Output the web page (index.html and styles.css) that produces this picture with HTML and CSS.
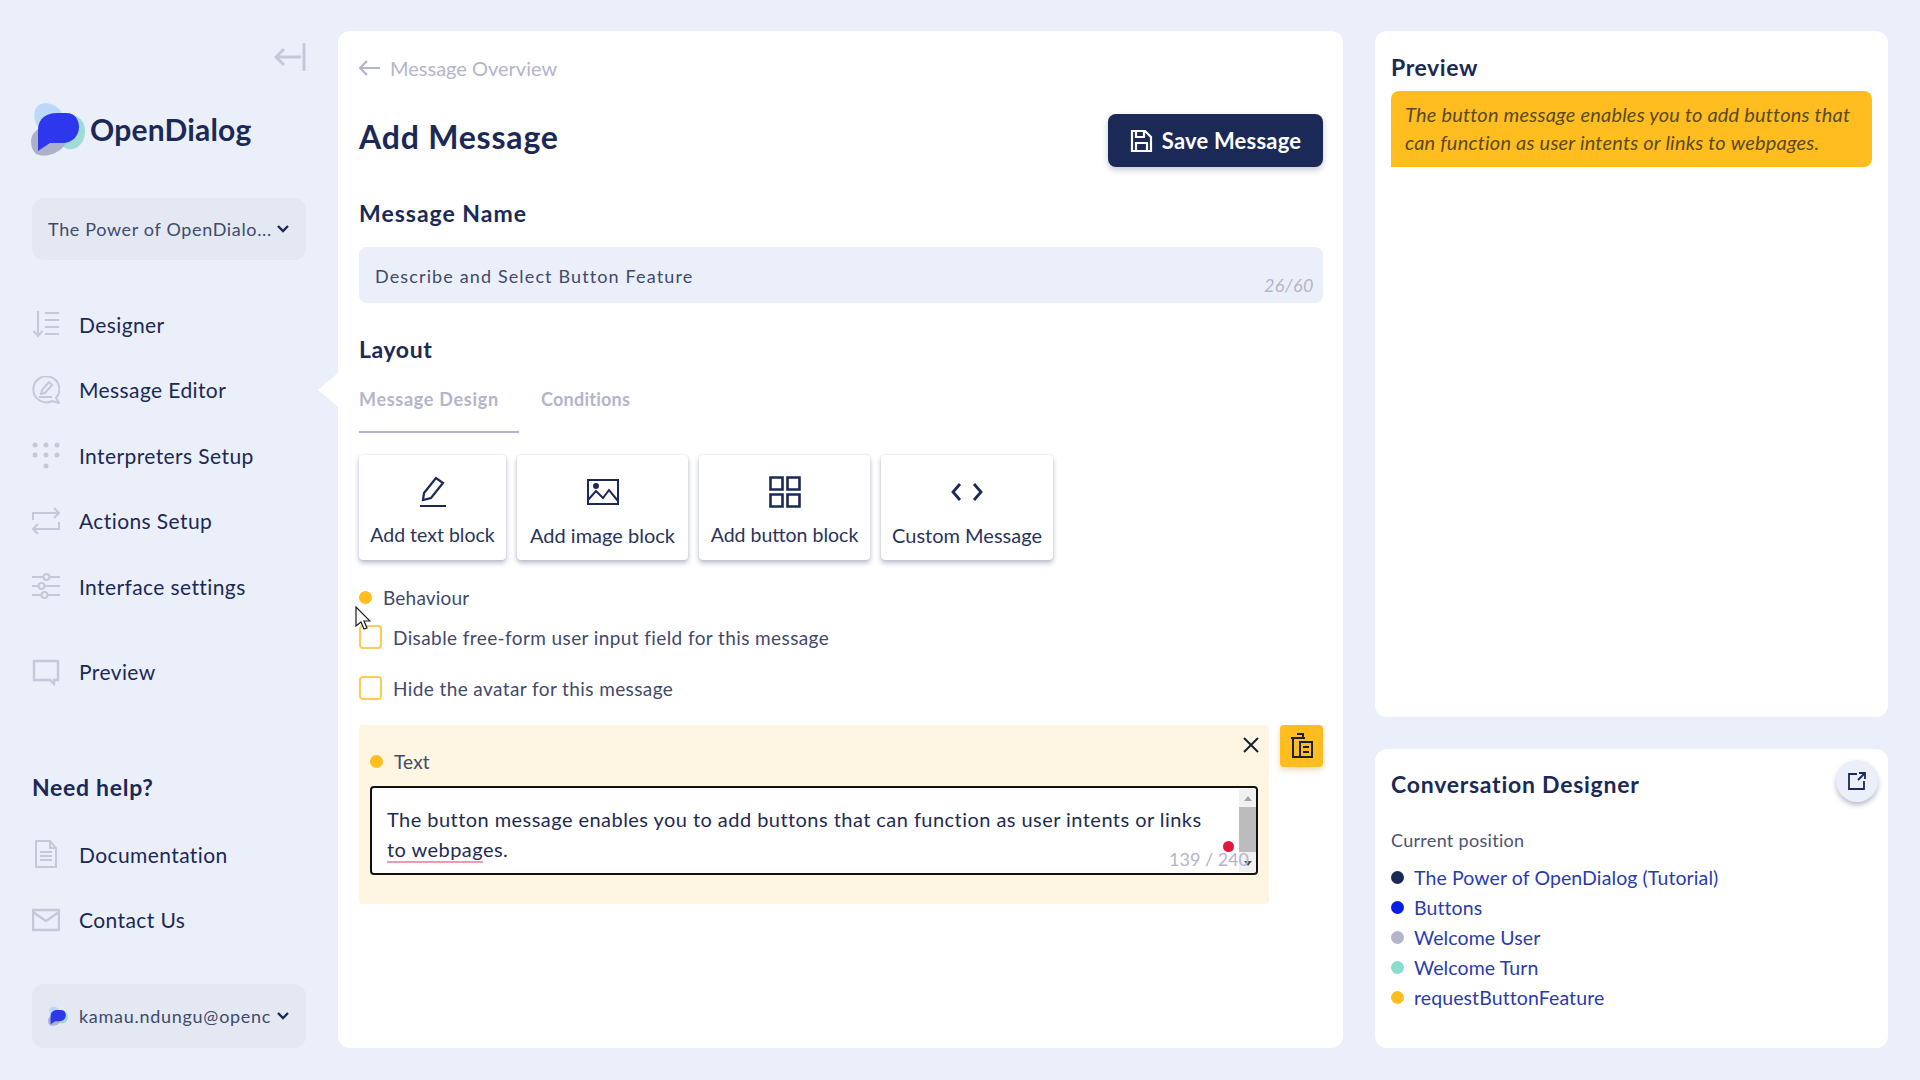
FILE: index.html
```html
<!DOCTYPE html>
<html lang="en">
<head>
    <meta charset="UTF-8">
    <title>OpenDialog - Add Message</title>
    <link rel="stylesheet" href="styles.css">
</head>
<body>
<div class="app">
    <aside class="sidebar">
        <div class="collapse-row">
            <svg width="32" height="28" viewBox="0 0 32 28" fill="none" stroke="#c6c8da" stroke-width="3"><path d="M27 14H1M10 6l-8 8 8 8"/><path d="M30 0v28"/></svg>
        </div>
        <div class="logo">
            <svg width="54" height="54" viewBox="0 0 54 54">
                <path d="M4 8C8 -2 22 0 29 8c5 6 0 20-10 22C8 31 1 20 4 8z" fill="#bcd8f8"/>
                <path d="M32 13c10-2 21 2 22 14 1 12-7 22-17 20C27 45 22 30 32 13z" fill="#9fdcd8"/>
                <path d="M0 39c0-10 12-17 24-15 10 2 14 12 9 20-6 8-18 11-25 9C3 52 0 46 0 39z" fill="#adb0cb"/>
                <path d="M7 49V28C7 16 16 11 26 11h9c10 0 13 8 13 14 0 9-7 16-16 16H19z" fill="#2c37ee"/>
            </svg>
            <span class="logo-text">OpenDialog</span>
        </div>
        <div class="select-box project-select">
            <span class="select-text">The Power of OpenDialo...</span>
            <svg class="chevron" width="14" height="10" viewBox="0 0 14 10" fill="none" stroke="#1b2956" stroke-width="2.400"><path d="M2 2l5 5 5-5"/></svg>
        </div>
        <nav class="nav-group">
            <div class="nav-item">
                <svg class="nav-icon" width="28" height="28" viewBox="0 0 28 28" fill="none" stroke="#c6c8da" stroke-width="2"><path d="M6 1v25M1.500 21L6 26l4.500-5M13 3h14M13 10h14M13 17h14M13 24h14"/></svg>
                <span>Designer</span>
            </div>
            <div class="nav-item active">
                <svg class="nav-icon" width="28" height="28" viewBox="0 0 28 28" fill="none" stroke="#c6c8da" stroke-width="2"><path d="M24 22a13 13 0 1 0-4 3l7 2z"/><path d="M9 18l1-4 7-8 3 3-7 8zM7 21h13"/></svg>
                <span>Message Editor</span>
            </div>
            <div class="nav-item">
                <svg class="nav-icon" width="28" height="28" viewBox="0 0 28 28" fill="#c6c8da"><circle cx="3" cy="4" r="2.500"/><circle cx="14" cy="4" r="2.500"/><circle cx="25" cy="4" r="2.500"/><circle cx="3" cy="14" r="2.500"/><circle cx="14" cy="14" r="2.500"/><circle cx="25" cy="14" r="2.500"/><circle cx="14" cy="25" r="2.500"/></svg>
                <span>Interpreters Setup</span>
            </div>
            <div class="nav-item">
                <svg class="nav-icon" width="28" height="28" viewBox="0 0 28 28" fill="none" stroke="#c6c8da" stroke-width="2"><path d="M1 13V6h26M22 1l5 5-5 5M27 15v7H1M6 17l-5 5 5 5"/></svg>
                <span>Actions Setup</span>
            </div>
            <div class="nav-item">
                <svg class="nav-icon" width="28" height="28" viewBox="0 0 28 28" fill="none" stroke="#c6c8da" stroke-width="2"><path d="M0 5h11M18 5h10M0 14h6M13 14h15M0 23h9M16 23h12"/><circle cx="14.500" cy="5" r="3"/><circle cx="9.500" cy="14" r="3"/><circle cx="12.500" cy="23" r="3"/></svg>
                <span>Interface settings</span>
            </div>
            <div class="nav-item preview-link">
                <svg class="nav-icon" width="28" height="28" viewBox="0 0 28 28" fill="none" stroke="#c6c8da" stroke-width="2.400"><path d="M2 3h24v19h-4v4l-4-4H2z"/></svg>
                <span>Preview</span>
            </div>
        </nav>
        <div class="help-title">Need help?</div>
        <nav class="nav-group help-group">
            <div class="nav-item">
                <svg class="nav-icon" width="28" height="28" viewBox="0 0 28 28" fill="none" stroke="#c6c8da" stroke-width="2"><path d="M4 1h14l6 7v19H4zM18 1v7h6M8 12h12M8 16h12M8 20h12"/></svg>
                <span>Documentation</span>
            </div>
            <div class="nav-item">
                <svg class="nav-icon" width="28" height="28" viewBox="0 0 28 28" fill="none" stroke="#c6c8da" stroke-width="2.400"><path d="M1 4h26v20H1zM1 6l13 9 13-9"/></svg>
                <span>Contact Us</span>
            </div>
        </nav>
        <div class="select-box user-select">
            <svg class="user-logo" width="20" height="20" viewBox="0 0 54 54">
                <path d="M4 8C8 -2 22 0 29 8c5 6 0 20-10 22C8 31 1 20 4 8z" fill="#bcd8f8"/>
                <path d="M32 13c10-2 21 2 22 14 1 12-7 22-17 20C27 45 22 30 32 13z" fill="#9fdcd8"/>
                <path d="M0 39c0-10 12-17 24-15 10 2 14 12 9 20-6 8-18 11-25 9C3 52 0 46 0 39z" fill="#adb0cb"/>
                <path d="M7 49V28C7 16 16 11 26 11h9c10 0 13 8 13 14 0 9-7 16-16 16H19z" fill="#2c37ee"/>
            </svg>
            <span class="select-text user-mail">kamau.ndungu@openc</span>
            <svg class="chevron" width="14" height="10" viewBox="0 0 14 10" fill="none" stroke="#1b2956" stroke-width="2.400"><path d="M2 2l5 5 5-5"/></svg>
        </div>
    </aside>

    <main class="main-card">
        <div class="back-link">
            <svg width="22" height="16" viewBox="0 0 22 16" fill="none" stroke="#b3b5cb" stroke-width="2.200"><path d="M21 8H1M8 1L1 8l7 7"/></svg>
            <span>Message Overview</span>
        </div>
        <div class="title-row">
            <h1>Add Message</h1>
            <div class="save-btn">
                <svg width="23" height="24" viewBox="0 0 23 24" fill="none" stroke="#fff" stroke-width="2.200"><path d="M2 2h13l6 6v14H2zM6 22v-8h11v8M6 2v6h8V2"/></svg>
                <span>Save Message</span>
            </div>
        </div>
        <h2 class="name-title">Message Name</h2>
        <div class="name-input">
            <span>Describe and Select Button Feature</span>
            <span class="name-count">26/60</span>
        </div>
        <h2 class="layout-title">Layout</h2>
        <div class="tabs">
            <div class="tab tab-active">Message Design</div>
            <div class="tab">Conditions</div>
        </div>
        <div class="block-row">
            <div class="block-btn text-btn">
                <svg width="30" height="32" viewBox="0 0 30 32" fill="none" stroke="#1b2956" stroke-width="2"><path d="M5 24l1-7L18 2l7 5-12 15zM2 30h26" stroke-width="2.200"/></svg>
                <span>Add text block</span>
            </div>
            <div class="block-btn image-btn">
                <svg width="32" height="28" viewBox="0 0 32 28" fill="none" stroke="#1b2956" stroke-width="2"><path d="M1 2h30v24H1z"/><path d="M1 22l8-9 7 7 6-8 9 11"/><circle cx="9" cy="8" r="2" fill="#1b2956"/></svg>
                <span>Add image block</span>
            </div>
            <div class="block-btn button-btn">
                <svg width="32" height="32" viewBox="0 0 32 32" fill="none" stroke="#1b2956" stroke-width="2.600"><path d="M1.500 1.500h12v12h-12zM18.500 1.500h12v12h-12zM1.500 18.500h12v12h-12zM18.500 18.500h12v12h-12z"/></svg>
                <span>Add button block</span>
            </div>
            <div class="block-btn custom-btn">
                <svg width="32" height="20" viewBox="0 0 32 20" fill="none" stroke="#1b2956" stroke-width="2.800"><path d="M9 2L2 10l7 8M23 2l7 8-7 8"/></svg>
                <span>Custom Message</span>
            </div>
        </div>
        <div class="dot-label behaviour">
            <span class="dot dot-amber"></span>
            <span>Behaviour</span>
        </div>
        <div class="check-row first-check">
            <span class="checkbox"></span>
            <span>Disable free-form user input field for this message</span>
        </div>
        <div class="check-row second-check">
            <span class="checkbox"></span>
            <span>Hide the avatar for this message</span>
        </div>
        <div class="text-block-row">
            <div class="text-block">
                <svg class="close-icon" width="18" height="18" viewBox="0 0 18 18" fill="none" stroke="#1b2030" stroke-width="2"><path d="M2 2l14 14M16 2L2 16"/></svg>
                <div class="dot-label">
                    <span class="dot dot-amber"></span>
                    <span>Text</span>
                </div>
                <div class="text-area">
                    <p>The button message enables you to add buttons that can function as user intents or links<br><span class="spell">to webpag</span>es.</p>
                    <div class="scrollbar">
                        <span class="arrow-up"></span>
                        <span class="thumb"></span>
                        <span class="arrow-down"></span>
                    </div>
                    <span class="red-dot"></span>
                    <span class="text-count">139 / 240</span>
                </div>
            </div>
            <div class="trash-btn">
                <svg width="24" height="26" viewBox="0 0 24 26" fill="none" stroke="#1b2030" stroke-width="2"><path d="M7 1h6v3M1 5h14M3 5v19h6M10 9h12v15H10z"/><path d="M13 14h6M13 19h6"/></svg>
            </div>
        </div>
        <svg class="cursor" width="16" height="24" viewBox="0 0 16 24"><path d="M1 1v19l5-4 3 7 3-1-3-7h6z" fill="#fff" stroke="#1b1b1b" stroke-width="1.200"/></svg>
    </main>

    <div class="right-col">
        <section class="preview-card">
            <h3 class="preview-title">Preview</h3>
            <div class="preview-bubble">The button message enables you to add buttons that can function as user intents or links to webpages.</div>
        </section>
        <section class="designer-card">
            <h3 class="designer-title">Conversation Designer</h3>
            <div class="open-btn">
                <svg width="18" height="18" viewBox="0 0 18 18" fill="none" stroke="#1b2956" stroke-width="1.800"><path d="M9 2H1v15h15V9M10 8l7-7M11 1h6v6"/></svg>
            </div>
            <div class="position-label">Current position</div>
            <ul class="position-list">
                <li><span class="dot dot-navy"></span>The Power of OpenDialog (Tutorial)</li>
                <li><span class="dot dot-blue"></span>Buttons</li>
                <li><span class="dot dot-grey"></span>Welcome User</li>
                <li><span class="dot dot-teal"></span>Welcome Turn</li>
                <li><span class="dot dot-amber"></span>requestButtonFeature</li>
            </ul>
        </section>
    </div>
</div>
</body>
</html>
```

FILE: styles.css
```css
* {
    box-sizing: border-box;
}
body {
    margin: 0;
    padding: 0;
    background: #ebeff9;
    color: #1b2956;
    font-family: Lato, "Liberation Sans", sans-serif;
    height: 100vh;
    overflow: hidden;
}
h1, h2, h3, p, ul {
    margin: 0;
    padding: 0;
}
.app {
    display: flex;
    height: 1080px;
    padding: 31px 32px 32px 0;
}

/* sidebar */
.sidebar {
    width: 338px;
    padding: 12px 32px 0 32px;
    display: flex;
    flex-direction: column;
    flex-shrink: 0;
}
.collapse-row {
    display: flex;
    justify-content: flex-end;
    height: 28px;
}
.logo {
    display: flex;
    align-items: center;
    height: 52px;
    margin-top: 32px;
    margin-left: -1px;
}
.logo-text {
    font-size: 30px;
    font-weight: 700;
    margin-left: 5px;
    letter-spacing: 0.2px;
}
.select-box {
    display: flex;
    align-items: center;
    background: #e4e8f3;
    border-radius: 12px;
    height: 62px;
    padding: 0 16px;
    color: #3f4a6c;
    font-size: 18px;
    letter-spacing: 0.65px;
    position: relative;
}
.project-select {
    margin-top: 43px;
}
.select-text {
    flex: 1;
    white-space: nowrap;
}
.chevron {
    flex-shrink: 0;
}
.nav-group {
    margin-top: 31.5px;
}
.nav-item {
    display: flex;
    align-items: center;
    height: 65.5px;
    font-size: 21px;
    letter-spacing: 0.4px;
    position: relative;
}
.nav-icon {
    flex-shrink: 0;
    margin-right: 19px;
}
.active::after {
    content: "";
    position: absolute;
    right: -32px;
    top: 16px;
    border-top: 17px solid transparent;
    border-bottom: 17px solid transparent;
    border-right: 20px solid #fff;
}
.preview-link {
    margin-top: 20px;
}
.help-title {
    font-size: 23px;
    font-weight: 700;
    letter-spacing: 0.7px;
    height: 30px;
    line-height: 30px;
    margin-top: 67px;
}
.help-group {
    margin-top: 20px;
}
.user-select {
    margin-top: auto;
    height: 64px;
    letter-spacing: 0.72px;
}
.user-logo {
    margin-right: 11px;
    flex-shrink: 0;
}

/* middle card */
.main-card {
    width: 1005px;
    flex-shrink: 0;
    background: #fff;
    border-radius: 12px;
    padding: 26px 20px 0 21px;
    position: relative;
}
.back-link {
    display: flex;
    align-items: center;
    height: 22px;
    font-size: 20px;
    color: #b3b5cb;
}
.back-link svg {
    margin-right: 9px;
}
.title-row {
    display: flex;
    justify-content: space-between;
    align-items: center;
    margin-top: 35px;
}
.title-row h1 {
    font-size: 32px;
    font-weight: 700;
    letter-spacing: 0.8px;
    margin-bottom: 8px;
}
.save-btn {
    display: flex;
    align-items: center;
    justify-content: center;
    width: 215px;
    height: 53px;
    background: #1b2956;
    color: #fff;
    border-radius: 8px;
    font-size: 22px;
    font-weight: 700;
    letter-spacing: 0.2px;
    box-shadow: 0 3px 6px rgba(27, 41, 86, 0.25);
}
.save-btn svg {
    margin-right: 9px;
}
h2 {
    font-size: 23px;
    font-weight: 700;
    line-height: 28px;
}
.name-title {
    margin-top: 32px;
    letter-spacing: 1px;
}
.name-input {
    display: flex;
    align-items: center;
    height: 56px;
    margin-top: 20px;
    padding: 2px 16px 0;
    background: #ebeff9;
    border-radius: 8px;
    color: #3f4a6c;
    font-size: 18px;
    letter-spacing: 1.13px;
    position: relative;
}
.name-count {
    position: absolute;
    right: 9px;
    bottom: 7px;
    color: #b3b5cb;
    font-style: italic;
    font-size: 18px;
    letter-spacing: 0.5px;
}
.layout-title {
    margin-top: 32px;
    letter-spacing: 0.6px;
}
.tabs {
    display: flex;
    gap: 22px;
    margin-top: 17px;
    color: #b3b5cb;
    font-size: 18px;
    font-weight: 700;
    letter-spacing: 0.25px;
}
.tab {
    padding: 7px 0 20px;
    line-height: 24px;
    border-bottom: 2px solid transparent;
}
.tab-active {
    width: 160px;
    letter-spacing: 0.7px;
    border-bottom-color: #b3b5cb;
}
.block-row {
    display: flex;
    gap: 11px;
    margin-top: 22px;
}
.block-btn {
    display: flex;
    flex-direction: column;
    align-items: center;
    height: 105px;
    background: #fff;
    border-radius: 4px;
    box-shadow: 0 3px 5px rgba(27, 41, 86, 0.3), 0 0 2px rgba(27, 41, 86, 0.12);
    font-size: 19.5px;
    color: #29345c;
}
.block-btn svg {
    height: 32px;
    margin-top: 21px;
}
.block-btn span {
    margin-top: 14px;
    line-height: 26px;
    white-space: nowrap;
}
.text-btn {
    width: 147px;
}
.image-btn {
    width: 171px;
    font-size: 20px;
}
.button-btn {
    width: 171px;
}
.custom-btn {
    width: 172px;
    font-size: 20px;
}
.dot {
    display: inline-block;
    width: 13px;
    height: 13px;
    border-radius: 50%;
    flex-shrink: 0;
}
.dot-amber {
    background: #ffbd1f;
}
.dot-navy {
    background: #1b2956;
}
.dot-blue {
    background: #0b1fe0;
}
.dot-grey {
    background: #b3b5cb;
}
.dot-teal {
    background: #8adccb;
}
.dot-label {
    display: flex;
    align-items: center;
    gap: 11px;
    height: 24px;
    font-size: 19px;
    letter-spacing: 0.2px;
    color: #3f4a6c;
}
.behaviour {
    margin-top: 25px;
}
.check-row {
    display: flex;
    align-items: center;
    gap: 11px;
    height: 24px;
    font-size: 19px;
    letter-spacing: 0.4px;
    color: #3f4a6c;
}
.first-check {
    margin-top: 16px;
}
.second-check {
    margin-top: 27px;
}
.checkbox {
    width: 23px;
    height: 24px;
    border: 2px solid #ffcb52;
    border-radius: 4px;
    background: #fff;
}
.text-block-row {
    display: flex;
    justify-content: space-between;
    margin-top: 25px;
}
.text-block {
    width: 910px;
    height: 179px;
    background: #fef6e2;
    border-radius: 4px;
    padding: 24px 11px 0;
    position: relative;
}
.close-icon {
    position: absolute;
    right: 9px;
    top: 11px;
}
.text-area {
    height: 89px;
    margin-top: 13px;
    background: #fff;
    border: 2px solid #111;
    border-radius: 4px;
    padding: 16px 20px 0 15px;
    position: relative;
}
.text-area p {
    font-size: 20px;
    line-height: 30px;
    letter-spacing: 0.45px;
    color: #1f2b52;
}
.spell {
    text-decoration: underline solid #ea9cb0 2px;
    text-underline-offset: 4px;
}
.red-dot {
    position: absolute;
    right: 22px;
    top: 53px;
    width: 11px;
    height: 11px;
    border-radius: 50%;
    background: #e3173e;
}
.text-count {
    position: absolute;
    right: 7px;
    bottom: 3px;
    color: #b3b5cb;
    font-size: 18px;
}
.scrollbar {
    position: absolute;
    right: 0;
    top: 1px;
    bottom: 1px;
    width: 17px;
    background: #f1f1f1;
    display: flex;
    flex-direction: column;
    align-items: center;
}
.arrow-up {
    margin-top: 7px;
    border-left: 4px solid transparent;
    border-right: 4px solid transparent;
    border-bottom: 5px solid #a3a3a3;
}
.thumb {
    width: 100%;
    height: 45px;
    margin-top: 6px;
    background: #bcbcbc;
}
.arrow-down {
    margin-top: auto;
    margin-bottom: 6px;
    border-left: 4px solid transparent;
    border-right: 4px solid transparent;
    border-top: 5px solid #505050;
}
.trash-btn {
    display: flex;
    align-items: center;
    justify-content: center;
    width: 43px;
    height: 42px;
    background: #ffbd1f;
    border-radius: 4px;
    box-shadow: 0 3px 6px rgba(180, 140, 30, 0.3);
}
.cursor {
    position: absolute;
    left: 17px;
    top: 575px;
}

/* right column */
.right-col {
    flex: 1;
    margin-left: 32px;
    display: flex;
    flex-direction: column;
    gap: 32px;
}
.preview-card {
    height: 686px;
    background: #fff;
    border-radius: 12px;
    padding: 21px 16px 0;
}
h3 {
    font-size: 23px;
    font-weight: 700;
    line-height: 30px;
}
.preview-title {
    letter-spacing: 0.6px;
}
.designer-title {
    letter-spacing: 0.75px;
}
.preview-bubble {
    margin-top: 9px;
    height: 76px;
    background: #ffbd1f;
    border-radius: 8px 8px 8px 0;
    padding: 9px 14px 0;
    font-size: 20px;
    font-style: italic;
    letter-spacing: 0.2px;
    line-height: 28px;
    color: #5a4a20;
}
.designer-card {
    flex: 1;
    background: #fff;
    border-radius: 12px;
    padding: 20px 16px 0;
    position: relative;
}
.open-btn {
    position: absolute;
    right: 10px;
    top: 11px;
    width: 42px;
    height: 42px;
    border-radius: 50%;
    background: #ebeff9;
    box-shadow: 0 3px 5px rgba(27, 41, 86, 0.3);
    display: flex;
    align-items: center;
    justify-content: center;
}
.position-label {
    margin-top: 29px;
    font-size: 18px;
    letter-spacing: 0.3px;
    line-height: 24px;
    color: #4b5470;
}
.position-list {
    list-style: none;
    margin-top: 10px;
}
.position-list li {
    display: flex;
    align-items: center;
    gap: 10px;
    height: 30px;
    font-size: 19.5px;
    letter-spacing: 0.1px;
    color: #2a3bb0;
}
```
